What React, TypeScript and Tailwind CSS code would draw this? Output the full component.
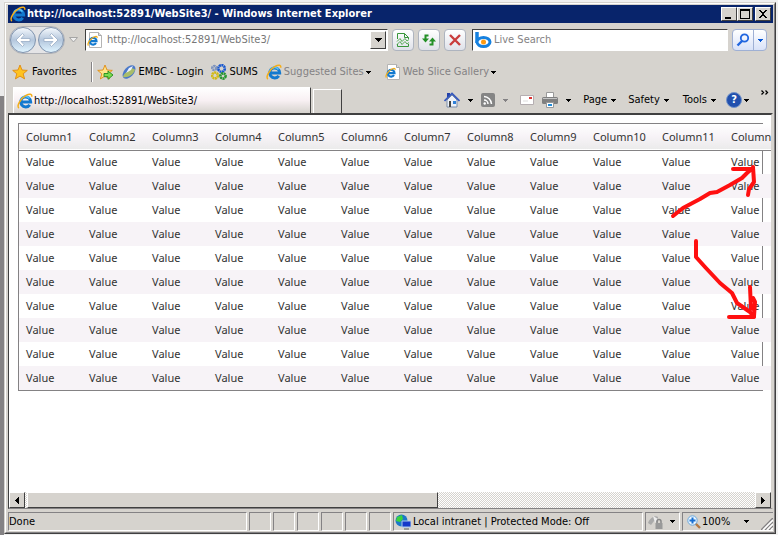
import { useState } from 'react';
import type { ReactNode } from 'react';

const columns = Array.from({ length: 12 }, (_, i) => `Column${i + 1}`);
const rows = Array.from({ length: 10 }, (_, i) => i);

const Caret = ({ className = 'fill-black' }: { className?: string }) => (
  <svg viewBox="0 0 5 3" className={`w-[5px] h-[3px] shrink-0 ${className}`} shapeRendering="crispEdges">
    <path d="M0 0h5v1H4v1H3v1H2V2H1V1H0z" />
  </svg>
);

const IeIcon = () => (
  <svg viewBox="0 0 16 16" className="size-4 shrink-0" fill="none">
    <path d="M4.500 9h9.200A5 5 0 1 0 12.800 11.800" stroke="#1279cf" strokeWidth="3" />
    <path d="M4 7a4.800 4.800 0 0 1 8.500-1.500" stroke="#5cc3f4" strokeWidth="1.500" />
    <path d="M2 15C-1 13.500 3.500 5.500 9 2.400 12.500.4 15.500.8 14.600 3.800" stroke="#f5ae18" strokeWidth="1.500" />
  </svg>
);

const PageIeIcon = () => (
  <svg viewBox="0 0 16 16" className="size-4 shrink-0" fill="none">
    <path d="M2.500.5h9l3 3v12h-12z" fill="#fff" stroke="#b4b4b4" />
    <path d="M11.500.5v3h3" fill="#ddd" stroke="#a8a8a8" />
    <path d="M3.500 9.200h6A3.400 3.400 0 1 0 9 11" stroke="#1279cf" strokeWidth="2.200" />
    <path d="M1.500 13.500C-.5 12.500 3.500 6.500 7 5c2.500-1 3.500-.5 3 1" stroke="#f5ae18" strokeWidth="1.300" />
  </svg>
);

const StarIcon = ({ add }: { add?: boolean }) => (
  <svg viewBox="0 0 16 16" className="size-4 shrink-0">
    <path
      d="M8 1l2 5 5.3.4-4.1 3.4 1.4 5.1L8 12.1l-4.6 2.8 1.4-5.1L.7 6.4 6 6z"
      fill={add ? '#ffe58a' : '#ffc320'}
      stroke="#e08a10"
      strokeWidth=".9"
    />
    {add && <path d="M7 9.5h4V7l5 4-5 4.300v-2.600H7z" fill="#7bdc4e" stroke="#218a1c" strokeWidth=".9" />}
  </svg>
);

const ToolButton = ({ label, children }: { label: string; children: ReactNode }) => (
  <button
    aria-label={label}
    className="flex size-[22px] shrink-0 items-center justify-center rounded-sm border border-[#aeb4bf] bg-linear-to-b from-white to-[#dfe1e9]"
  >
    {children}
  </button>
);

const NavButton = ({ label, flip }: { label: string; flip?: boolean }) => (
  <button
    aria-label={label}
    className="flex size-[26px] items-center justify-center rounded-full border border-[#7f93ae] bg-linear-to-b from-[#f4f8fc] via-[#b4c6dc] to-[#dff4ff]"
  >
    <svg viewBox="0 0 16 16" className={`size-4 ${flip ? 'rotate-180' : ''}`}>
      <path d="M7.5 1.5L1 8l6.5 6.5 1.7-1.700L6 9.500h9v-3H6l3.200-3.300z" fill="#fff" stroke="#8fa5c0" strokeWidth=".7" />
    </svg>
  </button>
);

const CaptionButton = ({ label, children }: { label: string; children: ReactNode }) => (
  <button
    aria-label={label}
    className="h-[14px] w-4 border border-t-white border-r-[#404040] border-b-[#404040] border-l-white bg-[#d6d3ce]"
  >
    <svg viewBox="0 0 14 12" className="block h-3 w-[14px]" shapeRendering="crispEdges">
      {children}
    </svg>
  </button>
);

const StatusCell = ({ className = '', children }: { className?: string; children?: ReactNode }) => (
  <div
    className={`flex h-[19px] items-center border border-t-[#848284] border-r-white border-b-white border-l-[#848284] ${className}`}
  >
    {children}
  </div>
);

const TitleBar = () => (
  <header className="flex h-[18px] shrink-0 items-center bg-[#08246b] pr-0.5 pl-0.5 text-white">
    <IeIcon />
    <h1 className="ml-px flex-1 truncate text-[11px] font-bold">
      http://localhost:52891/WebSite3/ - Windows Internet Explorer
    </h1>
    <CaptionButton label="Minimize">
      <path d="M3 9h6v2H3z" />
    </CaptionButton>
    <CaptionButton label="Maximize">
      <path d="M2 1h10v10H2zM3 3v7h8V3z" fillRule="evenodd" />
    </CaptionButton>
    <div className="w-0.5" />
    <CaptionButton label="Close">
      <path d="M3 2h2v1h1v1h2V3h1V2h2v1h-1v1H9v1H8v2h1v1h1v1h1v1H9V9H8V8H6v1H5v1H3V9h1V8h1V7h1V5H5V4H4V3H3z" />
    </CaptionButton>
  </header>
);

const AddressBar = () => {
  const [url, setUrl] = useState('http://localhost:52891/WebSite3/');
  return (
    <div className="flex h-[34px] shrink-0 items-center pr-1.5 pl-px">
      <div className="flex h-[28px] items-center gap-0.5 rounded-full border border-[#aeb0b5] bg-[#e4e4e6]">
        <NavButton label="Back" />
        <NavButton label="Forward" flip />
      </div>
      <button aria-label="Recent pages" className="ml-0.5 flex w-3 justify-center">
        <svg viewBox="0 0 9 6" className="h-1.5 w-[9px]">
          <path d="M.5.5h8l-4 4.5z" fill="#eee" stroke="#a5a5a5" />
        </svg>
      </button>
      <div className="ml-1.5 flex h-[22px] flex-1 items-center border border-t-[#404040] border-r-white border-b-white border-l-[#404040] bg-white p-px">
        <PageIeIcon />
        <input
          aria-label="Address"
          value={url}
          onChange={e => setUrl(e.target.value)}
          className="ml-1 min-w-0 flex-1 text-[#777] outline-none"
        />
        <button
          aria-label="Show address list"
          className="flex h-[18px] w-4 items-center justify-center border border-t-white border-r-[#404040] border-b-[#404040] border-l-white bg-[#d6d3ce]"
        >
          <svg viewBox="0 0 7 4" className="h-1 w-[7px]" shapeRendering="crispEdges">
            <path d="M0 0h7v1H6v1H5v1H4v1H3V3H2V2H1V1H0z" />
          </svg>
        </button>
      </div>
      <div className="ml-1 flex gap-1">
        <ToolButton label="Compatibility view">
          <svg viewBox="0 0 14 16" className="h-4 w-[14px]" fill="none">
            <path d="M1.500 7V1.500h7l4 4V7M1.500 12v2.500h11V12M8.500 1.500v4h4" stroke="#38963a" />
            <path d="M1 9.500l3-3 2 3 3-3 2 2.500 2-1.500" stroke="#55aa52" />
            <path d="M1 12.500l3-3 2 3 3-3 2 2.500 2-1.500" stroke="#55aa52" />
          </svg>
        </ToolButton>
        <ToolButton label="Refresh">
          <svg viewBox="0 0 16 16" className="size-4" fill="#239026">
            <path d="M7.500 2.500H3.500v4H1L4.500 10.500 8 6.500H5.500v-2h2z" />
            <path d="M8.500 13.500h4v-4H15L11.500 5.500 8 9.500h2.500v2h-2z" />
          </svg>
        </ToolButton>
        <ToolButton label="Stop">
          <svg viewBox="0 0 14 14" className="size-[14px]">
            <path d="M2 2l10 10M12 2L2 12" stroke="#c93c3c" strokeWidth="2.400" />
          </svg>
        </ToolButton>
      </div>
      <div className="ml-1.5 flex h-[22px] w-64 items-center border border-t-[#404040] border-r-white border-b-white border-l-[#404040] bg-white">
        <svg viewBox="0 0 18 18" className="ml-px size-[18px] shrink-0">
          <path d="M3 1v11" stroke="#1681df" strokeWidth="3.500" />
          <ellipse cx="9.500" cy="11" rx="6.500" ry="4.500" fill="#fff" stroke="#1681df" strokeWidth="3" />
          <circle cx="9.500" cy="11" r="2.500" fill="#ff9b10" />
        </svg>
        <input
          aria-label="Live Search"
          placeholder="Live Search"
          className="ml-0.5 min-w-0 flex-1 outline-none placeholder:text-[#848284]"
        />
      </div>
      <div className="ml-1 flex h-[22px] rounded-sm border border-[#9fb0d4] bg-linear-to-b from-white to-[#d9e2f8]">
        <button aria-label="Search" className="flex w-[21px] items-center justify-center border-r border-[#9fb0d4]">
          <svg viewBox="0 0 14 14" className="size-[14px]" fill="none" stroke="#2166df">
            <circle cx="8.500" cy="5" r="3.700" strokeWidth="1.800" />
            <path d="M6 8l-4.500 4.500" strokeWidth="2.400" />
          </svg>
        </button>
        <button aria-label="Search options" className="flex w-3 items-center justify-center">
          <Caret className="fill-[#0758d6]" />
        </button>
      </div>
    </div>
  );
};

const FavoritesBar = () => (
  <nav className="flex h-[30px] shrink-0 items-center pl-1">
    <button className="flex items-center gap-1">
      <StarIcon />
      Favorites
    </button>
    <div className="ml-3.5 h-5 w-0.5 border-r border-l border-r-white border-l-[#848284]" />
    <button aria-label="Add to Favorites Bar" className="ml-1">
      <StarIcon add />
    </button>
    <a href="#embc" className="ml-2 flex items-center gap-0.5">
      <svg viewBox="0 0 16 16" className="size-4">
        <ellipse cx="8" cy="8" rx="8" ry="4.800" transform="rotate(-48 8 8)" fill="#4b79c9" />
        <path d="M2 13C3 8 8 8 9 4c3 0 5 1 5 2-2 5-7 8-12 7z" fill="#a9bd6a" />
        <path d="M5 9l3-5 4-2-2 4z" fill="#eef3ff" />
      </svg>
      EMBC - Login
    </a>
    <a href="#sums" className="ml-2 flex items-center gap-0.5">
      <svg viewBox="0 0 16 16" className="size-4" fill="none" strokeWidth="2.600" strokeDasharray="2 .5">
        <circle cx="10.500" cy="4.500" r="3.300" stroke="#1555cf" />
        <circle cx="3.300" cy="4" r="2" stroke="#7e94be" />
        <circle cx="4" cy="11.500" r="2.900" stroke="#d1b914" />
        <circle cx="12" cy="12" r="2.600" stroke="#279531" />
      </svg>
      SUMS
    </a>
    <button className="ml-2 flex items-center gap-0.5 text-[#848284]">
      <IeIcon />
      Suggested Sites
      <Caret />
    </button>
    <button className="ml-3.5 flex items-center gap-0.5 text-[#848284]">
      <PageIeIcon />
      Web Slice Gallery
      <Caret />
    </button>
  </nav>
);

const CommandBar = () => (
  <div className="flex h-[26px] shrink-0 pl-[5px]">
    <div role="tablist" className="flex items-end">
      <button
        role="tab"
        aria-selected="true"
        className="flex h-[26px] w-[298px] items-center gap-px border border-t-white border-r-[#404040] border-b-0 border-l-white bg-linear-to-b from-white via-[#f8f0f3] to-[#d6d3ce] pl-[3px]"
      >
        <IeIcon />
        http://localhost:52891/WebSite3/
      </button>
      <button
        role="tab"
        aria-label="New Tab"
        aria-selected="false"
        className="ml-0.5 h-6 w-[29px] border border-t-white border-r-[#404040] border-b-0 border-l-white"
      />
    </div>
    <div className="flex flex-1 items-center justify-end pr-1">
      <button aria-label="Home" className="flex items-center gap-2">
        <svg viewBox="0 0 16 16" className="size-4">
          <path d="M3 8v7h10V8L8 3z" fill="#eef2f9" stroke="#7b8da9" />
          <path d="M3 1h3v4H3z" fill="#2440a8" />
          <path d="M.5 9L8 1.500 15.500 9" fill="none" stroke="#3457bd" strokeWidth="1.700" />
          <path d="M5 9h2v6H5z" fill="#444" />
          <path d="M9 9h3v3H9z" fill="#2f80d8" />
        </svg>
        <Caret />
      </button>
      <button aria-label="Feeds" className="ml-2 flex items-center gap-2">
        <svg viewBox="0 0 14 14" className="size-[14px]">
          <rect width="14" height="14" rx="2" fill="#858585" />
          <path d="M3 3.500a8 8 0 0 1 7.500 7.500M3 7a4 4 0 0 1 4 4" fill="none" stroke="#fff" strokeWidth="1.500" />
          <circle cx="3.700" cy="10.500" r="1.200" fill="#fff" />
        </svg>
        <Caret className="fill-[#848284]" />
      </button>
      <button aria-label="Read mail" className="ml-3">
        <svg viewBox="0 0 14 10" className="h-[10px] w-[14px]">
          <path d="M.5.500h13v9H.500z" fill="#fff" stroke="#b5aeb1" />
          <path d="M9 2h3v2H9z" fill="#d33" />
          <path d="M3 6h5" stroke="#ddd" />
        </svg>
      </button>
      <button aria-label="Print" className="ml-2 flex items-center gap-2">
        <svg viewBox="0 0 16 16" className="size-4">
          <path d="M4.500.5h7V6h-7z" fill="#fff" stroke="#999" />
          <rect y="5" width="16" height="7" rx="1.500" fill="#808080" />
          <path d="M1 6.500h14" stroke="#c4c4c4" />
          <path d="M4.500 10.500h7v5h-7z" fill="#fff" stroke="#999" />
          <path d="M6 12h4v2H6z" fill="#218bd8" />
        </svg>
        <Caret />
      </button>
      <button className="ml-3 flex items-center gap-1">
        Page
        <Caret />
      </button>
      <button className="ml-3 flex items-center gap-1">
        Safety
        <Caret />
      </button>
      <button className="ml-3.5 flex items-center gap-1">
        Tools
        <Caret />
      </button>
      <button aria-label="Help" className="ml-2.5 flex items-center gap-0.5">
        <span className="flex size-4 items-center justify-center rounded-full border border-[#7393c9] bg-[#2250ad] font-bold text-white">
          ?
        </span>
        <Caret />
      </button>
      <button aria-label="More commands" className="ml-3 self-start">
        <svg viewBox="0 0 8 5" className="mt-[3px] h-[5px] w-2" fill="none" stroke="#000" strokeWidth="1.300">
          <path d="M.5.500l2 2-2 2M4.500.500l2 2-2 2" />
        </svg>
      </button>
    </div>
  </div>
);

const DataGrid = () => (
  <div className="mt-2 mr-2 ml-[9px] border border-[#848284]">
    <table className="table-fixed border-collapse text-left font-['Noto_Sans',sans-serif] text-[11px] text-[#333]">
      <thead>
        <tr className="h-[26px] border-b border-[#848284] bg-linear-to-b from-white via-[#f7f3f7] to-[#ebebeb]">
          {columns.map((name, i) => (
            <th key={name} className={`pl-[7px] font-normal ${i > 8 ? 'min-w-[69px]' : 'min-w-[63px]'}`}>
              {name}
            </th>
          ))}
        </tr>
      </thead>
      <tbody>
        {rows.map(row => (
          <tr key={row} className="h-6 even:bg-[#f7f3f7]">
            {columns.map(name => (
              <td key={name} className="pl-[7px]">
                Value
              </td>
            ))}
          </tr>
        ))}
      </tbody>
    </table>
  </div>
);

const Annotations = () => (
  <svg
    viewBox="670 160 90 165"
    className="pointer-events-none absolute top-[45px] left-[661px] h-[165px] w-[90px]"
    fill="none"
    stroke="#ff1010"
    strokeWidth="4"
    strokeLinecap="round"
    strokeLinejoin="round"
  >
    <path d="M673 216l10-8 17-9 10-6 7-1 13-7 12-7 5-5 6-5M733 169h20M753 167l1 15-5 7-1 6" />
    <path d="M696 241v16l9 10 15 16 12 10 5 10 13 9 4 5M729 317h25M750 287l1 22M753 298l2 4-1 14" />
  </svg>
);

const ScrollButton = ({ label, d }: { label: string; d: string }) => (
  <button
    aria-label={label}
    className="flex w-4 shrink-0 items-center justify-center border border-t-white border-r-[#404040] border-b-[#404040] border-l-white bg-[#d6d3ce]"
  >
    <svg viewBox="0 0 4 7" className="h-[7px] w-1" shapeRendering="crispEdges">
      <path d={d} />
    </svg>
  </button>
);

const StatusBar = () => (
  <footer className="mt-[3px] flex h-5 shrink-0 gap-0.5">
    <StatusCell className="flex-1">Done</StatusCell>
    <div className="flex gap-0.5">
      {[0, 1, 2, 3, 4, 5].map(n => (
        <StatusCell key={n} className="w-[22px]" />
      ))}
    </div>
    <StatusCell className="w-[250px] gap-0.5 pl-px">
      <svg viewBox="0 0 16 16" className="size-4 shrink-0">
        <circle cx="6.500" cy="6.500" r="6" fill="#1d78c9" />
        <path d="M2 3l5-2 1 4-3 3-4-1zM7 9l3-1 1 4H7z" fill="#3bd33f" />
        <path d="M7 7h9v6H7z" fill="#1638c9" stroke="#a9c8ec" />
        <path d="M9 15h5" stroke="#999" strokeWidth="2" />
      </svg>
      <span className="whitespace-nowrap">Local intranet | Protected Mode: Off</span>
    </StatusCell>
    <StatusCell className="w-[35px] justify-between pr-1 pl-0.5">
      <svg viewBox="0 0 16 16" className="size-4">
        <path d="M0 9c2-6 8-8 10-6v6L6 7 3 11z" fill="#aaa" />
        <path d="M5 2l5 3-3 4z" fill="#eee" />
        <path d="M9 9V7.500a2 2 0 0 1 4 0V9" fill="none" stroke="#888" strokeWidth="1.500" />
        <path d="M7.500 9h7v6h-7z" fill="#999" />
      </svg>
      <Caret />
    </StatusCell>
    <StatusCell className="w-[91px] border-r-0 pl-1">
      <svg viewBox="0 0 14 14" className="size-[14px] shrink-0">
        <path d="M8 8l5 5" stroke="#b57a43" strokeWidth="2.400" />
        <circle cx="5.500" cy="5.500" r="4.700" fill="#e9f5ff" stroke="#69a7dc" />
        <path d="M5.500 2.500v6M2.500 5.500h6" stroke="#176fd2" strokeWidth="2" />
      </svg>
      <span className="ml-px">100%</span>
      <Caret className="ml-3.5 fill-black" />
      <svg viewBox="0 0 12 12" className="mt-1 ml-auto size-3" strokeWidth="1.500">
        <path d="M0 12L12 0M4 12l8-8M8 12l4-4" stroke="#848284" />
        <path d="M2 12L12 2M6 12l6-6M10 12l2-2" stroke="#fff" />
      </svg>
    </StatusCell>
  </footer>
);

export default function App() {
  return (
    <div className="flex h-screen bg-[#f0f0f0] font-['DejaVu_Sans_Condensed','DejaVu_Sans',sans-serif] text-[11px] leading-[14px] text-black">
      {/* Strip of the window behind */}
      <div className="flex w-1 shrink-0 flex-col">
        <div className="h-24 bg-[#ebebeb]" />
        <div className="flex-1 bg-[#848284]" />
      </div>
      <div className="mt-0.5 mr-0.5 mb-px flex min-w-0 flex-1 flex-col border border-t-[#d6d3ce] border-r-[#404040] border-b-[#404040] border-l-[#d6d3ce]">
        <div className="flex min-h-0 flex-1 flex-col border border-t-white border-r-[#848284] border-b-[#848284] border-l-white bg-[#d6d3ce] pt-px pr-px pl-0.5">
          <TitleBar />
          <AddressBar />
          <FavoritesBar />
          <CommandBar />
          <main className="relative flex min-h-0 flex-1 flex-col overflow-hidden border-t-2 border-r-2 border-b border-l border-t-[#404040] border-r-[#d6d3ce] border-b-[#848284] border-l-[#404040] bg-white">
            <div className="min-h-0 flex-1 overflow-hidden">
              <DataGrid />
            </div>
            <Annotations />
            <div className="flex h-4 shrink-0 bg-[repeating-conic-gradient(#fff_0_25%,#d6d3ce_0_50%)] bg-size-[2px_2px]">
              <ScrollButton label="Scroll left" d="M3 0h1v7H3V6H2V5H1V4H0V3h1V2h1V1h1z" />
              <div className="ml-0.5 w-[54%] border border-t-white border-r-[#404040] border-b-[#404040] border-l-white bg-[#d6d3ce]" />
              <div className="flex-1" />
              <ScrollButton label="Scroll right" d="M0 0h1v1h1v1h1v1h1v1H3v1H2v1H1v1H0z" />
            </div>
          </main>
          <StatusBar />
        </div>
      </div>
    </div>
  );
}
